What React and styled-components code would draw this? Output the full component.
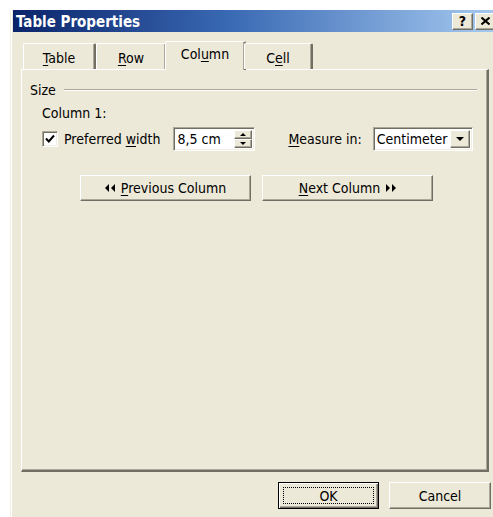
import React from "react";
import styled, { createGlobalStyle, css } from "styled-components";

const GlobalStyle = createGlobalStyle`
	html, body {
		margin: 0;
		padding: 0;
		background: #ffffff;
		overflow: hidden;
	}
	body {
		font-family: "DejaVu Sans Condensed", "DejaVu Sans", sans-serif;
		font-stretch: condensed;
		font-size: 14px;
		color: #000;
	}
`;

const raised = css`
	border-style: solid;
	border-width: 1px;
	border-color: #ffffff #716f64 #716f64 #ffffff;
	box-shadow: inset -1px -1px 0 #aca899;
`;

const sunken = css`
	border-style: solid;
	border-width: 1px;
	border-color: #aca899 #ffffff #ffffff #aca899;
	box-shadow: inset 1px 1px 0 #716f64, inset -1px -1px 0 #f1efe2;
`;

//window frame
const Window = styled.div`
	margin: 10px 0 0 10px;
	width: 484px;
	min-height: 520px;
	background: #ece9d8;
	border-left: 1px solid #f1efe2;
	border-right: 1px solid #716f64;
	padding: 0 2px;
	box-shadow: inset 1px 0 0 #ffffff;
`;

const TitleBar = styled.div`
	height: 22px;
	display: flex;
	align-items: center;
	padding-left: 3px;
	background: linear-gradient(90deg, #0a246a 0%, #3a6ab4 45%, #a6caf0 100%);
	color: #fff;
	font-weight: bold;
	font-size: 15px;
`;

const Title = styled.span`
	flex: 1;
	padding-top: 1px;
`;

const CaptionButton = styled.div`
	width: 21px;
	height: 17px;
	margin-right: ${(p) => p.$mr || 0}px;
	background: #ece9d8;
	${raised};
	display: flex;
	align-items: center;
	justify-content: center;
	color: #000;
	font-size: 14px;
	font-weight: bold;
	font-family: "DejaVu Sans", sans-serif;
	box-sizing: border-box;
`;

const Body = styled.div`
	padding: 9px 6px 0 8px;
`;

//tabs
const TabStrip = styled.div`
	display: flex;
	align-items: flex-end;
	padding-left: 2px;
	height: 28px;
	position: relative;
	z-index: 1;
`;

const Tab = styled.div`
	width: ${(p) => p.$w}px;
	height: ${(p) => (p.$active ? 29 : 26)}px;
	margin: ${(p) => (p.$active ? "0 -2px -1px -2px" : "0")};
	box-sizing: border-box;
	background: #ece9d8;
	border-top: 1px solid #ffffff;
	border-left: 1px solid #ffffff;
	border-right: 2px solid #716f64;
	border-radius: 2px 2px 0 0;
	box-shadow: inset -1px 0 0 #aca899;
	display: flex;
	justify-content: center;
	padding-top: ${(p) => (p.$active ? 4 : 6)}px;

	u {
		text-decoration-thickness: 1px;
		text-underline-offset: 2px;
	}
`;

const Panel = styled.div`
	width: 468px;
	height: 403px;
	box-sizing: border-box;
	border-style: solid;
	border-width: 1px 2px 2px 1px;
	border-color: #ffffff #716f64 #716f64 #ffffff;
	box-shadow: inset -1px -1px 0 #aca899;
	padding: 11px 10px 0 8px;
`;

const GroupHeader = styled.div`
	display: flex;
	align-items: center;
	gap: 8px;
	height: 18px;

	&::after {
		content: "";
		flex: 1;
		height: 0;
		border-top: 1px solid #aca899;
		border-bottom: 1px solid #ffffff;
	}
`;

const GroupBody = styled.div`
	padding-left: 12px;
`;

const Label = styled.div`
	height: 18px;
	margin-top: 5px;
	display: flex;
	align-items: center;
`;

const Row = styled.div`
	display: flex;
	align-items: center;
	margin-top: 5px;
	height: 24px;

	u {
		text-underline-offset: 2px;
	}
`;

const RowText = styled.span`
	margin-left: ${(p) => p.$ml || 0}px;
`;

const CheckBox = styled.div`
	width: 16px;
	height: 16px;
	box-sizing: border-box;
	background: #fff;
	${sunken};
	margin-right: 6px;
	display: flex;
	align-items: center;
	justify-content: center;
`;

const Field = styled.div`
	width: ${(p) => p.$w}px;
	height: 24px;
	box-sizing: border-box;
	background: #fff;
	${sunken};
	margin-left: ${(p) => p.$ml}px;
	display: flex;
	align-items: stretch;
	padding: 2px 2px 2px 3px;
`;

const FieldText = styled.span`
	flex: 1;
	display: flex;
	align-items: center;
	white-space: nowrap;
	overflow: hidden;
`;

const SpinBox = styled.div`
	width: 18px;
	display: flex;
	flex-direction: column;
`;

const SpinHalf = styled.div`
	flex: 1;
	background: #ece9d8;
	${raised};
	display: flex;
	align-items: center;
	justify-content: center;
`;

const DropButton = styled.div`
	width: 18px;
	background: #ece9d8;
	${raised};
	display: flex;
	align-items: center;
	justify-content: center;
`;

const NavRow = styled.div`
	display: flex;
	gap: 11px;
	margin-top: 24px;
	padding-left: 50px;
`;

const Button = styled.div`
	width: ${(p) => p.$w}px;
	height: ${(p) => p.$h || 26}px;
	box-sizing: border-box;
	background: #ece9d8;
	${raised};
	display: flex;
	align-items: center;
	justify-content: center;
	gap: 5px;

	u {
		text-underline-offset: 2px;
	}

	${(p) =>
		p.$default &&
		css`
			position: relative;
			border: 1px solid #000;
			box-shadow: inset 1px 1px 0 #fff, inset -1px -1px 0 #716f64,
				inset -2px -2px 0 #aca899;
		`}
`;

const FocusRing = styled.div`
	position: absolute;
	inset: 4px;
	border: 1px dotted #000;
	pointer-events: none;
`;

const Footer = styled.div`
	display: flex;
	justify-content: flex-end;
	gap: 10px;
	margin-top: 10px;
`;

const Arrow = ({ dir, size = 4 }) => {
	const pts =
		dir === "up"
			? `0,${size} ${size},0 ${size * 2},${size}`
			: `0,0 ${size * 2},0 ${size},${size}`;
	return (
		<svg width={size * 2} height={size} viewBox={`0 0 ${size * 2} ${size}`}>
			<polygon points={pts} fill="#000" />
		</svg>
	);
};

const DoubleArrow = ({ left }) => (
	<svg width="11" height="8" viewBox="0 0 11 8">
		{left ? (
			<>
				<polygon points="4,0 0,4 4,8" fill="#000" />
				<polygon points="10,0 6,4 10,8" fill="#000" />
			</>
		) : (
			<>
				<polygon points="1,0 5,4 1,8" fill="#000" />
				<polygon points="7,0 11,4 7,8" fill="#000" />
			</>
		)}
	</svg>
);

const App = () => {
	return (
		<>
			<GlobalStyle />
			<Window>
				<TitleBar>
					<Title>Table Properties</Title>
					<CaptionButton $mr={2}>?</CaptionButton>
					<CaptionButton $mr={1}>
						<svg width="9" height="8" viewBox="0 0 9 8">
							<path d="M0.5 0.5 L8.5 7.5 M8.5 0.5 L0.5 7.5" stroke="#000" strokeWidth="2" />
						</svg>
					</CaptionButton>
				</TitleBar>
				<Body>
					<TabStrip>
						<Tab $w={73}>
							<span>
								<u>T</u>able
							</span>
						</Tab>
						<Tab $w={71}>
							<span>
								<u>R</u>ow
							</span>
						</Tab>
						<Tab $w={81} $active>
							<span>
								Col<u>u</u>mn
							</span>
						</Tab>
						<Tab $w={69}>
							<span>
								C<u>e</u>ll
							</span>
						</Tab>
					</TabStrip>
					<Panel>
						<GroupHeader>Size</GroupHeader>
						<GroupBody>
							<Label>Column 1:</Label>
							<Row>
								<CheckBox>
									<svg width="10" height="10" viewBox="0 0 10 10">
										<path d="M1 4.5 L3.8 7.5 L9 1.5" stroke="#000" strokeWidth="2" fill="none" />
									</svg>
								</CheckBox>
								<RowText>
									Preferred <u>w</u>idth
								</RowText>
								<Field $w={82} $ml={13}>
									<FieldText>8,5 cm</FieldText>
									<SpinBox>
										<SpinHalf>
											<Arrow dir="up" size={3} />
										</SpinHalf>
										<SpinHalf>
											<Arrow dir="down" size={3} />
										</SpinHalf>
									</SpinBox>
								</Field>
								<RowText $ml={33}>
									<u>M</u>easure in:
								</RowText>
								<Field $w={100} $ml={11}>
									<FieldText>Centimeter</FieldText>
									<DropButton>
										<Arrow dir="down" size={4} />
									</DropButton>
								</Field>
							</Row>
						</GroupBody>
						<NavRow>
							<Button $w={171}>
								<DoubleArrow left />
								<span>
									<u>P</u>revious Column
								</span>
							</Button>
							<Button $w={171}>
								<span>
									<u>N</u>ext Column
								</span>
								<DoubleArrow />
							</Button>
						</NavRow>
					</Panel>
					<Footer>
						<Button $w={101} $h={27} $default>
							OK
							<FocusRing />
						</Button>
						<Button $w={102} $h={27}>
							Cancel
						</Button>
					</Footer>
				</Body>
			</Window>
		</>
	);
};

export default App;
